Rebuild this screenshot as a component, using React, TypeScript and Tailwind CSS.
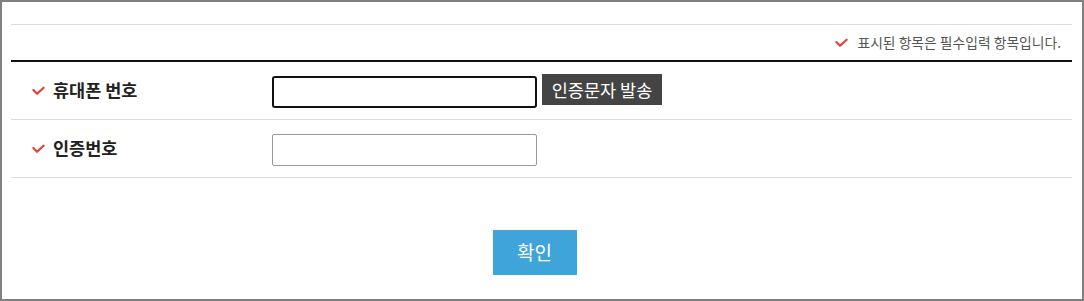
import React from 'react';

const Check = ({ className = '' }: { className?: string }) => (
  <svg viewBox="0 0 14 10" className={className} fill="none">
    <polyline points="1.5,4 5.5,8 12.5,1.5" stroke="#e0423c" strokeWidth="2.4" strokeLinecap="round" strokeLinejoin="round" />
  </svg>
);

export default function App() {
  return (
    <div
      className="w-[1084px] h-[301px] border-2 border-[#808080] bg-white"
      style={{ fontFamily: '"Noto Sans CJK KR", "Noto Sans", sans-serif' }}
    >
      <div className="pl-[9px] pr-[10px] pt-[22px]">
        {/* required notice */}
        <div className="border-t border-[#dddddd] h-[36px] flex items-center justify-end pr-[11px] gap-[9px] text-[13.8px] text-[#555555]">
          <Check className="w-[13px] h-[10px]" />
          <span>표시된 항목은 필수입력 항목입니다.</span>
        </div>

        <div className="border-t-2 border-[#111111]">
          {/* phone row */}
          <div className="flex items-center h-[58px] border-b border-[#dddddd]">
            <div className="w-[261px] flex items-center pl-[21px] gap-[8px]">
              <Check className="w-[13px] h-[10px]" />
              <span className="text-[17.5px] font-bold text-[#222222]">휴대폰 번호</span>
            </div>
            <input
              type="text"
              className="w-[265px] h-[32px] mt-[2px] border-2 border-[#111111] rounded-[3px] outline-none px-[5px]"
            />
            <button className="ml-[5px] mb-[2px] w-[120px] h-[31px] bg-[#444444] text-white text-[17.5px] leading-none">
              인증문자 발송
            </button>
          </div>

          {/* code row */}
          <div className="flex items-center h-[58px] border-b border-[#dddddd]">
            <div className="w-[261px] flex items-center pl-[21px] gap-[8px]">
              <Check className="w-[13px] h-[10px]" />
              <span className="text-[17.5px] font-bold text-[#222222]">인증번호</span>
            </div>
            <input
              type="text"
              className="w-[265px] h-[32px] mt-[2px] border border-[#999999] rounded-[2px] outline-none px-[5px]"
            />
          </div>
        </div>

        <div className="flex justify-center pt-[52px]">
          <button className="w-[84px] h-[45px] bg-[#3fa4da] text-white text-[19px] ml-[-14px]">확인</button>
        </div>
      </div>
    </div>
  );
}
